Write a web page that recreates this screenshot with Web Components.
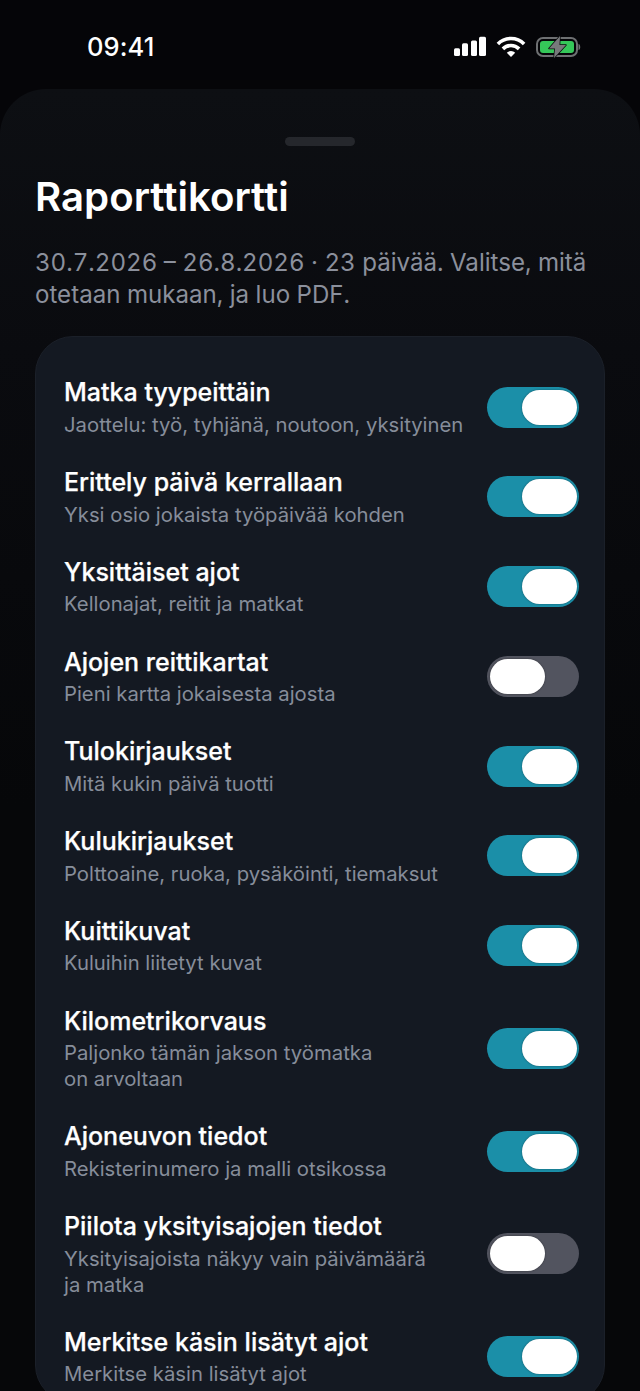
<!DOCTYPE html>
<html lang="fi"><head><meta charset="utf-8"><title>Raporttikortti</title>
<style>
html,body{margin:0;padding:0;height:1391px;overflow:hidden;background:#050508;}
body{font-family:Inter,"Noto Sans",sans-serif;}
</style></head><body>
<report-screen></report-screen>
<script>
class StatusBar extends HTMLElement{constructor(){super();this.attachShadow({mode:'open'}).innerHTML=`
<style>
:host{display:flex;height:89px;box-sizing:border-box;padding:5px 59px 0 87px;align-items:center;justify-content:space-between;color:#fff}
.t{font:500 25.500px/30px Inter,sans-serif;letter-spacing:.1px}
svg{display:block}
</style>
<span class="t">09:41</span>
<svg width="127" height="24" viewBox="0 0 127 24">
<g fill="#fff"><rect x="0" y="13.300" width="6" height="7.700" rx="1.500"/><rect x="8" y="8.300" width="6" height="12.700" rx="1.500"/><rect x="17" y="5.500" width="6" height="15.500" rx="1.500"/><rect x="25" y="1.700" width="7" height="19.300" rx="1.500"/></g>
<g fill="none" stroke="#fff" stroke-width="3.600"><path d="M43.900 8.900A18.500 18.500 0 0 1 70.100 8.900"/><path d="M48.900 13.900A11.500 11.500 0 0 1 65.100 13.900"/></g>
<path d="M57 22 52.800 17.800A6 6 0 0 1 61.200 17.800Z" fill="#fff"/>
<rect x="83" y="3" width="40" height="18" rx="6" fill="none" stroke="#6e7072" stroke-width="2"/>
<rect x="86" y="6" width="34" height="12" rx="3" fill="#35c759"/>
<path d="M124.500 9c2.300.4 2.300 5.600 0 6z" fill="#6e7072"/>
<path d="M106 1 95 13.500h6L100 23 112 10h-6.500Z" fill="#77797b" stroke="#0a0b0d" stroke-width="1.500" stroke-linejoin="round" paint-order="stroke"/>
</svg>`}}
customElements.define('status-bar',StatusBar);

class ToggleSwitch extends HTMLElement{constructor(){super();this.attachShadow({mode:'open'}).innerHTML=`
<style>
:host{display:flex;flex:none;width:92px;height:41px;box-sizing:border-box;border-radius:21px;padding:3px;background:#52545f;justify-content:flex-start}
:host([on]){background:#1b8fa8;justify-content:flex-end;padding-right:2px}
.k{width:54.500px;height:35px;border-radius:18px;background:#fff;box-shadow:0 0 2px rgba(0,0,0,.45)}
:host([on]) .k{width:55px}
</style><div class="k"></div>`}}
customElements.define('toggle-switch',ToggleSwitch);

class ReportRow extends HTMLElement{
constructor(){super();this.attachShadow({mode:'open'}).innerHTML=`
<style>
:host{display:flex;align-items:center;gap:10px;padding:14.140px 0}
.x{flex:1;min-width:0;display:flex;flex-direction:column;gap:2.500px}
.h{font:500 25px/33px Inter,sans-serif;color:#fff;-webkit-text-stroke:.25px #fff}
.s{font:400 20.300px/26px Inter,sans-serif;color:#868d9a}
</style>
<div class="x"><div class="h"><slot name="h"></slot></div><div class="s"><slot name="s"></slot></div></div><slot name="t"></slot>`}}
customElements.define('report-row',ReportRow);

class SheetCard extends HTMLElement{constructor(){super();this.attachShadow({mode:'open'}).innerHTML=`
<style>:host{display:block;background:#141922;border:1px solid #1b2029;border-radius:38px;padding:25.300px 25px 0 28px}</style><slot></slot>`}}
customElements.define('sheet-card',SheetCard);

const rows=[
['Matka tyypeittäin','Jaottelu: työ, tyhjänä, noutoon, yksityinen',1],
['Erittely päivä kerrallaan','Yksi osio jokaista työpäivää kohden',1],
['Yksittäiset ajot','Kellonajat, reitit ja matkat',1],
['Ajojen reittikartat','Pieni kartta jokaisesta ajosta',0],
['Tulokirjaukset','Mitä kukin päivä tuotti',1],
['Kulukirjaukset','Polttoaine, ruoka, pysäköinti, tiemaksut',1],
['Kuittikuvat','Kuluihin liitetyt kuvat',1],
['Kilometrikorvaus','Paljonko tämän jakson työmatka<br>on arvoltaan',1],
['Ajoneuvon tiedot','Rekisterinumero ja malli otsikossa',1],
['Piilota yksityisajojen tiedot','Yksityisajoista näkyy vain päivämäärä<br>ja matka',0],
['Merkitse käsin lisätyt ajot','Merkitse käsin lisätyt ajot',1]];

class ReportScreen extends HTMLElement{constructor(){super();
const r=this.attachShadow({mode:'open'});
r.innerHTML=`
<style>
:host{display:block;height:1391px;overflow:hidden}
.sheet{background:linear-gradient(#0d0f13,#0a0b0f 20%,#060709 55%);border-radius:46px 46px 0 0;padding:48px 35px 0;height:1302px;box-sizing:border-box}
.grab{width:70px;height:9px;border-radius:5px;background:#25272c;margin:0 auto 29px}
h1{margin:0;font:600 40.200px/44px Inter,sans-serif;color:#fff}
p{margin:28px 0 25px;font:400 24.100px/32px Inter,sans-serif;color:#8b909c;font-variant-numeric:tabular-nums}
</style>
<status-bar></status-bar>
<div class="sheet"><div class="grab"></div><h1>Raporttikortti</h1>
<p>30.7.2026 – 26.8.2026 · 23 päivää. Valitse, mitä otetaan mukaan, ja luo PDF.</p>
<sheet-card>${rows.map(x=>`<report-row><span slot="h">${x[0]}</span><span slot="s">${x[1]}</span><toggle-switch slot="t"${x[2]?' on':''}></toggle-switch></report-row>`).join('')}</sheet-card></div>`;
}}
customElements.define('report-screen',ReportScreen);
</script></body></html>
